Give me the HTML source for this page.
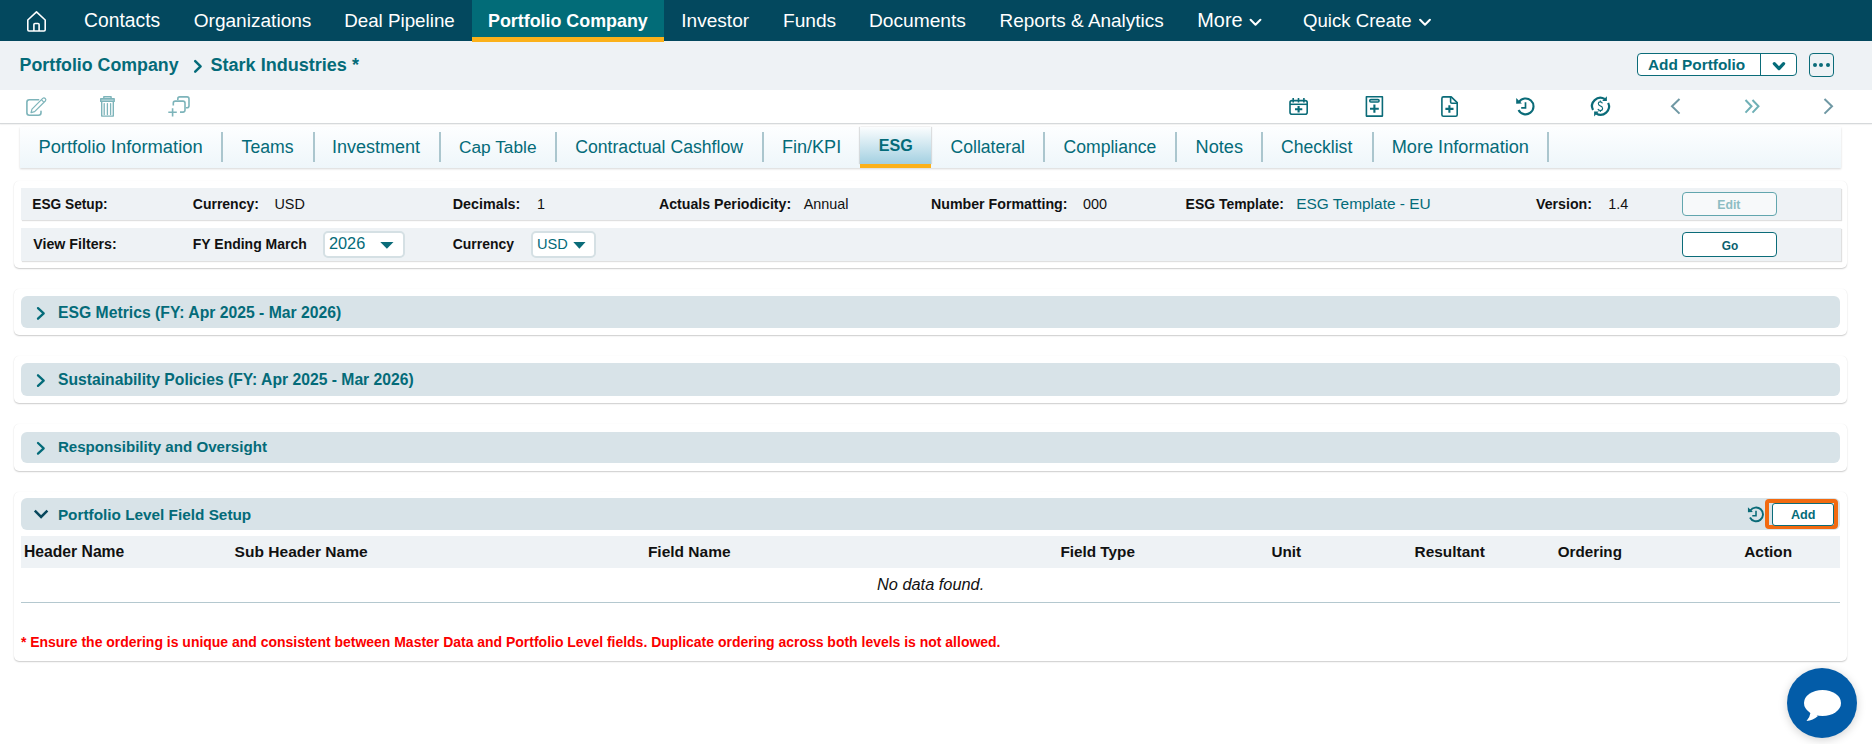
<!DOCTYPE html>
<html><head><meta charset="utf-8"><title>ESG - Stark Industries</title>
<style>
html,body{margin:0;padding:0}
body{width:1872px;height:744px;position:relative;overflow:hidden;background:#fff;font-family:"Liberation Sans",sans-serif}
.a{position:absolute;box-sizing:border-box}
.t{position:absolute;white-space:nowrap;line-height:1}
svg{position:absolute;overflow:visible}
</style></head><body>
<!-- top nav -->
<div class="a" style="left:0;top:0;width:1872px;height:41px;background:#03485e"></div>
<div class="a" style="left:472px;top:0;width:192px;height:41px;background:#026c78"></div>
<!-- breadcrumb bar -->
<div class="a" style="left:0;top:41px;width:1872px;height:49px;background:#eef2f5"></div>
<div class="a" style="left:472px;top:37px;width:192px;height:5px;background:#fbb11a"></div>
<div class="a" style="left:1637px;top:53px;width:160px;height:23px;background:#fff;border:1.5px solid #0b6c79;border-radius:4px"></div>
<div class="a" style="left:1760px;top:53px;width:1.2px;height:23px;background:#0b6c79"></div>
<div class="a" style="left:1809px;top:53px;width:25px;height:24px;border:1.5px solid #0b6c79;border-radius:4px"></div>
<div class="a" style="left:1813px;top:63px;width:4px;height:4px;border-radius:2px;background:#0b6c79"></div>
<div class="a" style="left:1819.3px;top:63px;width:4px;height:4px;border-radius:2px;background:#0b6c79"></div>
<div class="a" style="left:1826px;top:63px;width:4px;height:4px;border-radius:2px;background:#0b6c79"></div>
<!-- toolbar -->
<div class="a" style="left:0;top:123px;width:1872px;height:1px;background:#d6d9db;box-shadow:0 1px 1px rgba(0,0,0,0.06)"></div>
<!-- left disabled icons -->
<!-- right icons -->
<svg style="left:1670px;top:98px" width="11" height="17" viewBox="0 0 11 17"><path d="M9.5 1 L2 8.3 L9.5 15.6" fill="none" stroke="#6f98a4" stroke-width="2"/></svg>
<svg style="left:1744px;top:99px" width="17" height="15" viewBox="0 0 17 15"><path d="M1.5 1 L7.5 7.3 L1.5 13.6 M8.5 1 L14.5 7.3 L8.5 13.6" fill="none" stroke="#6fb0b6" stroke-width="2"/></svg>
<svg style="left:1823px;top:98px" width="11" height="17" viewBox="0 0 11 17"><path d="M1.5 1 L9 8.3 L1.5 15.6" fill="none" stroke="#6f98a4" stroke-width="2"/></svg>
<!-- tabs -->
<div class="a" style="left:20px;top:127px;width:1821px;height:41px;background:linear-gradient(#fdfeff,#eef6fa);box-shadow:0 1px 2px rgba(0,0,0,0.16)"></div>
<div class="a" style="left:859.5px;top:127px;width:71px;height:37px;background:linear-gradient(#fbfdfe,#a3d0e1);box-shadow:-1px 0 1px rgba(0,0,0,0.12),1px 0 1px rgba(0,0,0,0.12)"></div>
<div class="a" style="left:859.5px;top:163.7px;width:71px;height:4.3px;background:#fbb11a"></div>
<div class="a" style="left:221px;top:132px;width:1.5px;height:30px;background:#abc6ce"></div>
<div class="a" style="left:313px;top:132px;width:1.5px;height:30px;background:#abc6ce"></div>
<div class="a" style="left:439px;top:132px;width:1.5px;height:30px;background:#abc6ce"></div>
<div class="a" style="left:555px;top:132px;width:1.5px;height:30px;background:#abc6ce"></div>
<div class="a" style="left:762px;top:132px;width:1.5px;height:30px;background:#abc6ce"></div>
<div class="a" style="left:1043px;top:132px;width:1.5px;height:30px;background:#abc6ce"></div>
<div class="a" style="left:1175px;top:132px;width:1.5px;height:30px;background:#abc6ce"></div>
<div class="a" style="left:1261px;top:132px;width:1.5px;height:30px;background:#abc6ce"></div>
<div class="a" style="left:1372px;top:132px;width:1.5px;height:30px;background:#abc6ce"></div>
<div class="a" style="left:1547px;top:132px;width:1.5px;height:30px;background:#abc6ce"></div>
<!-- setup card -->
<div class="a" style="left:14px;top:181px;width:1833px;height:87px;background:#fff;border-radius:5px;box-shadow:0 1px 1.5px rgba(0,0,0,0.2),0 0 1px rgba(0,0,0,0.07)"></div>
<div class="a" style="left:21px;top:188px;width:1820px;height:32px;background:#eef2f5;box-shadow:1px 1px 1px rgba(0,0,0,0.12)"></div>
<div class="a" style="left:21px;top:228px;width:1820px;height:33px;background:#eef2f5;box-shadow:1px 1px 1px rgba(0,0,0,0.12)"></div>
<div class="a" style="left:323.3px;top:231px;width:81.5px;height:26.5px;background:#fff;border:2px solid #d5e0e4;border-radius:5px"></div>
<svg style="left:380px;top:242px" width="14" height="7" viewBox="0 0 14 7"><path d="M0.3 0 H13.5 L6.9 6.8 Z" fill="#0b6c79"/></svg>
<div class="a" style="left:531.3px;top:231px;width:65px;height:26.5px;background:#fff;border:2px solid #d5e0e4;border-radius:5px"></div>
<svg style="left:572.5px;top:242px" width="13" height="7" viewBox="0 0 13 7"><path d="M0.3 0 H12.5 L6.4 6.8 Z" fill="#0b6c79"/></svg>
<div class="a" style="left:1682px;top:192px;width:95px;height:24px;background:#f7f9fa;border:1px solid #62a6ae;border-radius:4px"></div>
<div class="a" style="left:1682px;top:232px;width:95px;height:25px;background:#fff;border:1.5px solid #0b6c79;border-radius:4px"></div>
<!-- section cards -->
<div class="a" style="left:14px;top:289px;width:1833px;height:46px;background:#fff;border-radius:5px;box-shadow:0 1px 1.5px rgba(0,0,0,0.2),0 0 1px rgba(0,0,0,0.07)"></div>
<div class="a" style="left:21px;top:296px;width:1819px;height:32px;background:#d8e3e8;border-radius:6px"></div>
<div class="a" style="left:14px;top:356px;width:1833px;height:46.5px;background:#fff;border-radius:5px;box-shadow:0 1px 1.5px rgba(0,0,0,0.2),0 0 1px rgba(0,0,0,0.07)"></div>
<div class="a" style="left:21px;top:363px;width:1819px;height:32.5px;background:#d8e3e8;border-radius:6px"></div>
<div class="a" style="left:14px;top:424px;width:1833px;height:46.5px;background:#fff;border-radius:5px;box-shadow:0 1px 1.5px rgba(0,0,0,0.2),0 0 1px rgba(0,0,0,0.07)"></div>
<div class="a" style="left:21px;top:431.5px;width:1819px;height:31.5px;background:#d8e3e8;border-radius:6px"></div>
<div class="a" style="left:14px;top:491.5px;width:1833px;height:169.5px;background:#fff;border-radius:5px;box-shadow:0 1px 1.5px rgba(0,0,0,0.2),0 0 1px rgba(0,0,0,0.07)"></div>
<div class="a" style="left:21px;top:498.3px;width:1819px;height:32.2px;background:#d8e3e8;border-radius:6px"></div>
<div class="a" style="left:1765px;top:499px;width:73px;height:30px;border:4px solid #f26a10;border-radius:4px"></div>
<div class="a" style="left:1772px;top:503px;width:62px;height:22.5px;background:#fff;border:1px solid #0b6c79;border-radius:3px"></div>
<div class="a" style="left:21px;top:536px;width:1819px;height:31.5px;background:#eef2f5"></div>
<div class="a" style="left:21px;top:602px;width:1819px;height:1px;background:#b4c8cf"></div>
<!-- chat -->
<div class="a" style="left:1787px;top:668px;width:70px;height:70px;border-radius:35px;background:#035ca8;box-shadow:0 2px 10px rgba(0,0,0,0.18)"></div>
<svg style="left:1803px;top:689px" width="40" height="33" viewBox="0 0 40 33"><ellipse cx="19.5" cy="14" rx="18.5" ry="13" fill="#fff"/><path d="M8 22 Q7 28 3.5 32 Q10 31.5 15 27 Z" fill="#fff"/></svg>
<svg style="left:0;top:0;z-index:5" width="1872" height="744" viewBox="0 0 1872 744">
<g fill="none" stroke-linecap="round" stroke-linejoin="round">
<path d="M1250.6 19.8 L1255.5 24.8 L1260.4 19.8 M1420.1 19.8 L1425 24.8 L1429.9 19.8" stroke="#fff" stroke-width="2"/>
<path d="M195.2 61.1 L200.6 66.4 L195.2 71.7" stroke="#046b79" stroke-width="2.5"/>
<path d="M1774.3 63.6 L1779 68.6 L1783.6 63.6" stroke="#046b79" stroke-width="3.2"/>
<path d="M38 308.1 L43.7 313.4 L38 318.7" stroke="#046b79" stroke-width="2.3"/>
<path d="M38 375.3 L43.7 380.6 L38 385.9" stroke="#046b79" stroke-width="2.3"/>
<path d="M38 443 L43.7 448.3 L38 453.6" stroke="#046b79" stroke-width="2.3"/>
</g>
<path d="M34.8 510.6 L41.1 516.9 L47.4 510.6" fill="none" stroke="#08475c" stroke-width="2.5"/>
</svg>

<svg style="left:0;top:0;z-index:5" width="1872" height="744" viewBox="0 0 1872 744">
<g fill="none" stroke="#fff" stroke-width="1.6" stroke-linejoin="round">
<path d="M27.8 20 L36.5 11.9 L45.2 20 V29.8 Q45.2 31 44 31 H29 Q27.8 31 27.8 29.8 Z"/>
<path d="M33.9 31 V24.6 Q33.9 23.5 35 23.5 H38 Q39.1 23.5 39.1 24.6 V31"/>
</g>
<g fill="none" stroke="#7db4ba" stroke-linecap="round" stroke-linejoin="round">
<path d="M38.6 99.8 H29.4 Q26.9 99.8 26.9 102.3 V112.8 Q26.9 115.3 29.4 115.3 H38.5 Q41 115.3 41 112.8 V111.3" stroke-width="1.6"/>
<path d="M31 112.7 L32 109.1 L42.7 98.4 A1.84 1.84 0 0 1 45.3 101 L34.6 111.7 Z M41.4 99.7 L44 102.3" stroke-width="1.2"/>
<path d="M103.8 98.8 V96.8 H111.1 V98.8" stroke-width="1.4" stroke-linecap="butt"/>
<rect x="100.7" y="98.8" width="13.5" height="2.6" fill="#b8d6da" stroke-width="1.4"/>
<path d="M101.7 101.4 V116.1 H113.3 V101.4" stroke-width="1.4" stroke-linecap="butt"/>
<path d="M104.2 103.6 V114.6 M107.4 103.6 V114.6 M110.6 103.6 V114.6" stroke-width="1.3"/>
<path d="M177.8 100.1 V98.9 Q177.8 96.9 179.8 96.9 H187 Q189 96.9 189 98.9 V105.8 Q189 107.8 187 107.8 H185.8" stroke-width="1.6" stroke-linecap="butt"/>
<path d="M173.3 105.5 V103.1 Q173.3 101.1 175.3 101.1 H183 Q185 101.1 185 103.1 V110.1 Q185 112.1 183 112.1 H180" stroke-width="1.6" stroke-linecap="butt"/>
<path d="M168.3 112.3 H176.8 M172.6 108.2 V116.6" stroke-width="1.6" stroke-linecap="butt"/>
</g>
<g fill="none" stroke="#0a6b78" stroke-linejoin="round">
<rect x="1290" y="100.6" width="17.2" height="13.7" rx="2" stroke-width="1.6"/>
<path d="M1290 104.3 H1307.2" stroke-width="1.5"/>
<path d="M1293.2 97.9 V102.6 M1298.5 97.9 V102.6 M1303.9 97.9 V102.6" stroke-width="1.6"/>
<path d="M1295 109.2 H1302.3 M1298.6 106 V112.6" stroke-width="2.1"/>
<rect x="1366.4" y="96.8" width="16" height="19.3" stroke-width="1.6"/>
<rect x="1369.8" y="99.6" width="9.2" height="2.4" rx="1" stroke-width="1.6"/>
<path d="M1370 108.7 H1378.8 M1374.4 104.4 V112.7" stroke-width="2.1"/>
<path d="M1451.2 96.9 H1443.4 Q1441.9 96.9 1441.9 98.4 V114.8 Q1441.9 116.3 1443.4 116.3 H1455.7 Q1457.2 116.3 1457.2 114.8 V102.6 Z" stroke-width="1.6"/>
<path d="M1450.6 97 V102 Q1450.6 103.3 1451.9 103.3 H1457.2" stroke-width="1.6"/>
<path d="M1445.4 108.9 H1453.5 M1449.4 105.2 V112.7" stroke-width="2.1"/>
<g transform="translate(1525.6 106.4)">
<path d="M-7.04 3.59 A7.9 7.9 0 1 0 -6.7 -4.19" stroke-width="2.1"/>
<path d="M-9.4 -8.3 L-9.4 -2.6 L-3.7 -2.8 Z" fill="#0a6b78" stroke="none"/>
<path d="M-0.1 -4.2 V1.5 H-4.4" stroke-width="1.7" stroke-linejoin="miter"/>
</g>
<g transform="translate(1756.1 514.4) scale(0.87)">
<path d="M-7.04 3.59 A7.9 7.9 0 1 0 -6.7 -4.19" stroke-width="2.2"/>
<path d="M-9.4 -8.3 L-9.4 -2.6 L-3.7 -2.8 Z" fill="#0a6b78" stroke="none"/>
<path d="M-0.1 -4.2 V1.5 H-4.4" stroke-width="1.8" stroke-linejoin="miter"/>
</g>
<path d="M1593 110.1 A8.4 8.4 0 0 1 1604.7 99" stroke-width="2.2"/>
<path d="M1602.2 101.1 L1606.9 96.3 L1606.9 101.1 Z" fill="#0a6b78" stroke="none"/>
<path d="M1608.2 102.9 A8.4 8.4 0 0 1 1596.3 113.6" stroke-width="2.2"/>
<path d="M1598.8 111.6 L1594.1 116.4 L1594.1 111.6 Z" fill="#0a6b78" stroke="none"/>
<path d="M1602.4 103.4 Q1602 101.9 1600.3 101.9 Q1598.3 101.9 1598.3 103.6 Q1598.3 105.2 1600.3 105.9 Q1602.6 106.6 1602.6 108.5 Q1602.6 110.5 1600.3 110.5 Q1598.4 110.5 1597.9 109 M1600.3 100.4 V101.9 M1600.3 110.5 V112" stroke-width="1.1"/>
</g>
</svg>

<div id="n1" class="t" style="left:84.10px;top:10.81px;font-size:19.30px;font-weight:400;font-style:normal;color:#ffffff">Contacts</div>
<div id="n2" class="t" style="left:193.69px;top:10.81px;font-size:19.09px;font-weight:400;font-style:normal;color:#ffffff">Organizations</div>
<div id="n3" class="t" style="left:344.19px;top:11.80px;font-size:18.77px;font-weight:400;font-style:normal;color:#ffffff">Deal Pipeline</div>
<div id="n4" class="t" style="left:488.00px;top:12.80px;font-size:17.86px;font-weight:700;font-style:normal;color:#ffffff">Portfolio Company</div>
<div id="n5" class="t" style="left:681.30px;top:10.81px;font-size:19.07px;font-weight:400;font-style:normal;color:#ffffff">Investor</div>
<div id="n6" class="t" style="left:782.94px;top:10.81px;font-size:19.17px;font-weight:400;font-style:normal;color:#ffffff">Funds</div>
<div id="n7" class="t" style="left:868.89px;top:10.81px;font-size:19.20px;font-weight:400;font-style:normal;color:#ffffff">Documents</div>
<div id="n8" class="t" style="left:999.48px;top:11.80px;font-size:18.96px;font-weight:400;font-style:normal;color:#ffffff">Reports &amp; Analytics</div>
<div id="n9" class="t" style="left:1197.34px;top:10.80px;font-size:19.88px;font-weight:400;font-style:normal;color:#ffffff">More</div>
<div id="n10" class="t" style="left:1302.99px;top:11.81px;font-size:18.61px;font-weight:400;font-style:normal;color:#ffffff">Quick Create</div>
<div id="b1" class="t" style="left:19.61px;top:56.80px;font-size:17.78px;font-weight:700;font-style:normal;color:#046b79">Portfolio Company</div>
<div id="b2" class="t" style="left:210.50px;top:55.80px;font-size:18.06px;font-weight:700;font-style:normal;color:#046b79">Stark Industries *</div>
<div id="ap" class="t" style="left:1647.99px;top:56.71px;font-size:15.36px;font-weight:700;font-style:normal;color:#046b79">Add Portfolio</div>
<div id="t1" class="t" style="left:38.40px;top:137.81px;font-size:18.36px;font-weight:400;font-style:normal;color:#046b79">Portfolio Information</div>
<div id="t2" class="t" style="left:241.60px;top:138.80px;font-size:17.67px;font-weight:400;font-style:normal;color:#046b79">Teams</div>
<div id="t3" class="t" style="left:331.97px;top:137.81px;font-size:18.00px;font-weight:400;font-style:normal;color:#046b79">Investment</div>
<div id="t4" class="t" style="left:459.00px;top:138.80px;font-size:17.30px;font-weight:400;font-style:normal;color:#046b79">Cap Table</div>
<div id="t5" class="t" style="left:575.19px;top:138.81px;font-size:17.66px;font-weight:400;font-style:normal;color:#046b79">Contractual Cashflow</div>
<div id="t6" class="t" style="left:781.89px;top:137.81px;font-size:18.10px;font-weight:400;font-style:normal;color:#046b79">Fin/KPI</div>
<div id="t7" class="t" style="left:878.67px;top:136.51px;font-size:16.11px;font-weight:700;font-style:normal;color:#046b79">ESG</div>
<div id="t8" class="t" style="left:950.48px;top:138.81px;font-size:17.62px;font-weight:400;font-style:normal;color:#046b79">Collateral</div>
<div id="t9" class="t" style="left:1063.49px;top:138.81px;font-size:17.60px;font-weight:400;font-style:normal;color:#046b79">Compliance</div>
<div id="t10" class="t" style="left:1195.57px;top:137.81px;font-size:18.18px;font-weight:400;font-style:normal;color:#046b79">Notes</div>
<div id="t11" class="t" style="left:1280.99px;top:138.81px;font-size:17.59px;font-weight:400;font-style:normal;color:#046b79">Checklist</div>
<div id="t12" class="t" style="left:1391.69px;top:137.81px;font-size:18.17px;font-weight:400;font-style:normal;color:#046b79">More Information</div>
<div id="s1" class="t" style="left:32.30px;top:197.80px;font-size:13.71px;font-weight:700;font-style:normal;color:#111111">ESG Setup:</div>
<div id="s2" class="t" style="left:192.78px;top:196.81px;font-size:14.01px;font-weight:700;font-style:normal;color:#111111">Currency:</div>
<div id="s3" class="t" style="left:274.40px;top:196.80px;font-size:14.40px;font-weight:400;font-style:normal;color:#111111">USD</div>
<div id="s4" class="t" style="left:452.79px;top:196.80px;font-size:14.31px;font-weight:700;font-style:normal;color:#111111">Decimals:</div>
<div id="s5" class="t" style="left:537.00px;top:196.80px;font-size:14.40px;font-weight:400;font-style:normal;color:#111111">1</div>
<div id="s6" class="t" style="left:658.99px;top:196.81px;font-size:14.17px;font-weight:700;font-style:normal;color:#111111">Actuals Periodicity:</div>
<div id="s7" class="t" style="left:803.70px;top:196.81px;font-size:14.40px;font-weight:400;font-style:normal;color:#111111">Annual</div>
<div id="s8" class="t" style="left:930.99px;top:196.81px;font-size:14.21px;font-weight:700;font-style:normal;color:#111111">Number Formatting:</div>
<div id="s9" class="t" style="left:1083.00px;top:196.81px;font-size:14.40px;font-weight:400;font-style:normal;color:#111111">000</div>
<div id="s10" class="t" style="left:1185.59px;top:197.81px;font-size:13.96px;font-weight:700;font-style:normal;color:#111111">ESG Template:</div>
<div id="s11" class="t" style="left:1296.19px;top:195.81px;font-size:15.46px;font-weight:400;font-style:normal;color:#046b79">ESG Template - EU</div>
<div id="s12" class="t" style="left:1536.00px;top:196.80px;font-size:14.20px;font-weight:700;font-style:normal;color:#111111">Version:</div>
<div id="s13" class="t" style="left:1608.33px;top:196.81px;font-size:14.40px;font-weight:400;font-style:normal;color:#111111">1.4</div>
<div id="s14" class="t" style="left:1717.27px;top:199.11px;font-size:12.24px;font-weight:700;font-style:normal;color:#8dbdc3">Edit</div>
<div id="v1" class="t" style="left:33.30px;top:236.81px;font-size:14.21px;font-weight:700;font-style:normal;color:#111111">View Filters:</div>
<div id="v2" class="t" style="left:192.80px;top:236.81px;font-size:13.99px;font-weight:700;font-style:normal;color:#111111">FY Ending March</div>
<div id="v3" class="t" style="left:328.91px;top:235.11px;font-size:16.33px;font-weight:400;font-style:normal;color:#046b79">2026</div>
<div id="v4" class="t" style="left:452.78px;top:237.80px;font-size:13.93px;font-weight:700;font-style:normal;color:#111111">Currency</div>
<div id="v5" class="t" style="left:537.02px;top:237.11px;font-size:14.58px;font-weight:400;font-style:normal;color:#046b79">USD</div>
<div id="v6" class="t" style="left:1721.69px;top:241.00px;font-size:11.86px;font-weight:700;font-style:normal;color:#0a5f6e">Go</div>
<div id="h1" class="t" style="left:58.00px;top:304.60px;font-size:15.74px;font-weight:700;font-style:normal;color:#046b79">ESG Metrics (FY: Apr 2025 - Mar 2026)</div>
<div id="h2" class="t" style="left:58.00px;top:371.81px;font-size:15.70px;font-weight:700;font-style:normal;color:#046b79">Sustainability Policies (FY: Apr 2025 - Mar 2026)</div>
<div id="h3" class="t" style="left:57.90px;top:439.01px;font-size:15.12px;font-weight:700;font-style:normal;color:#046b79">Responsibility and Oversight</div>
<div id="h4" class="t" style="left:57.90px;top:506.60px;font-size:15.34px;font-weight:700;font-style:normal;color:#046b79">Portfolio Level Field Setup</div>
<div id="ad" class="t" style="left:1791.00px;top:509.01px;font-size:12.64px;font-weight:700;font-style:normal;color:#046b79">Add</div>
<div id="c1" class="t" style="left:24.01px;top:544.01px;font-size:15.69px;font-weight:700;font-style:normal;color:#111111">Header Name</div>
<div id="c2" class="t" style="left:234.58px;top:544.01px;font-size:15.55px;font-weight:700;font-style:normal;color:#111111">Sub Header Name</div>
<div id="c3" class="t" style="left:647.90px;top:544.00px;font-size:15.50px;font-weight:700;font-style:normal;color:#111111">Field Name</div>
<div id="c4" class="t" style="left:1060.38px;top:544.01px;font-size:15.31px;font-weight:700;font-style:normal;color:#111111">Field Type</div>
<div id="c5" class="t" style="left:1271.40px;top:544.00px;font-size:15.25px;font-weight:700;font-style:normal;color:#111111">Unit</div>
<div id="c6" class="t" style="left:1414.59px;top:544.00px;font-size:15.41px;font-weight:700;font-style:normal;color:#111111">Resultant</div>
<div id="c7" class="t" style="left:1557.80px;top:544.01px;font-size:15.20px;font-weight:700;font-style:normal;color:#111111">Ordering</div>
<div id="c8" class="t" style="left:1744.28px;top:544.01px;font-size:15.38px;font-weight:700;font-style:normal;color:#111111">Action</div>
<div id="nd" class="t" style="left:877.00px;top:576.01px;font-size:16.35px;font-weight:400;font-style:italic;color:#111111">No data found.</div>
<div id="rd" class="t" style="left:20.90px;top:636.00px;font-size:13.97px;font-weight:700;font-style:normal;color:#fb0000">* Ensure the ordering is unique and consistent between Master Data and Portfolio Level fields. Duplicate ordering across both levels is not allowed.</div>
</body></html>
